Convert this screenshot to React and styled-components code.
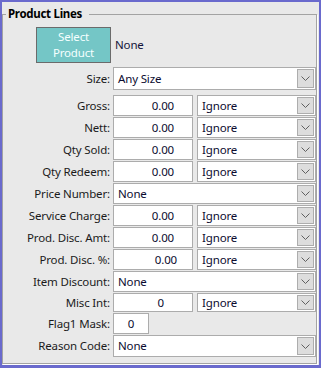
import React from "react";
import styled, { createGlobalStyle } from "styled-components";

const Global = createGlobalStyle`
  html, body { margin: 0; padding: 0; background: #e9e9e9; }
  * { box-sizing: border-box; }
  body {
    font-family: "Noto Sans", "Segoe UI", Arial, sans-serif;
    font-size: 11.5px;
    letter-spacing: -0.15px;
    color: #111;
  }
`;

const Frame = styled.div`
  width: 321px;
  height: 368px;
  border: 2px solid #6a6acd;
  border-bottom-width: 3px;
  background: #e9e9e9;
  overflow: hidden;
`;

const Group = styled.fieldset`
  margin: 4px 2px 0 0;
  padding: 5px 0 5px 0;
  border: 1px solid #a3a3a3;
  box-shadow: 1px 1px 0 #ffffff;
  min-width: 0;
`;

const Legend = styled.legend`
  margin-left: 3px;
  padding: 0 7px 0 2px;
  font-weight: bold;
  font-size: 11.5px;
  letter-spacing: -0.3px;
  line-height: 16px;
  color: #000;
`;

const Row = styled.div`
  display: grid;
  grid-template-columns: 107px 1fr;
  column-gap: 3px;
  height: ${(p) => p.$h}px;
  margin-bottom: ${(p) => p.$mb || 0}px;
  align-items: start;
`;

const Label = styled.div`
  text-align: right;
  line-height: ${(p) => p.$h}px;
  height: ${(p) => p.$h}px;
  white-space: nowrap;
  color: #1b1b1b;
`;

const ButtonCell = styled.div`
  display: flex;
  justify-content: flex-end;
`;

const SelectButton = styled.button`
  width: 75px;
  height: 36px;
  margin-right: -1px;
  background: #74c6c6;
  border: 1px solid #6b6b6b;
  color: #f4ffff;
  font-family: inherit;
  font-size: 11.5px;
  letter-spacing: -0.15px;
  line-height: 16px;
  padding: 0;
  text-align: center;
`;

const Plain = styled.div`
  line-height: 36px;
  padding-left: 2px;
  color: #14143a;
`;

const Controls = styled.div`
  display: flex;
  gap: 4px;
  height: ${(p) => p.$h}px;
`;

const NumberBox = styled.div`
  width: ${(p) => p.$w || 80}px;
  height: ${(p) => p.$h}px;
  background: #fff;
  border: 1px solid #acacac;
  text-align: ${(p) => p.$align || "right"};
  padding-right: ${(p) => p.$pr ?? 18}px;
  line-height: ${(p) => p.$h - 2}px;
  color: #0c0c30;
  flex: none;
`;

const SelectBox = styled.div`
  flex: 1;
  height: ${(p) => p.$h}px;
  background: #fff;
  border: 1px solid #acacac;
  padding: 1px;
  display: flex;
  align-items: stretch;
  min-width: 0;
`;

const SelectText = styled.div`
  flex: 1;
  padding-left: 3px;
  line-height: ${(p) => p.$h - 4}px;
  color: #0c0c30;
  white-space: nowrap;
  overflow: hidden;
`;

const DropButton = styled.div`
  width: 17px;
  flex: none;
  background: #dddddd;
  border: 1px solid #adadad;
  display: flex;
  align-items: center;
  justify-content: center;
`;

const Chevron = () => (
  <svg width="9" height="5" viewBox="0 0 9 5">
    <path d="M0.5 0.5 L4.5 4.5 L8.5 0.5" fill="none" stroke="#606060" strokeWidth="1" />
  </svg>
);

const Select = ({ value, h }) => (
  <SelectBox $h={h}>
    <SelectText $h={h}>{value}</SelectText>
    <DropButton>
      <Chevron />
    </DropButton>
  </SelectBox>
);

const NumberRow = ({ label, value, h = 22, pr }) => (
  <Row $h={h}>
    <Label $h={h - 1}>{label}</Label>
    <Controls $h={h - 1}>
      <NumberBox $h={h - 1} $pr={pr}>{value}</NumberBox>
      <Select value="Ignore" h={h - 1} />
    </Controls>
  </Row>
);

const SelectRow = ({ label, value, h = 22, mb }) => (
  <Row $h={h} $mb={mb}>
    <Label $h={h - 1}>{label}</Label>
    <Controls $h={h - 1}>
      <Select value={value} h={h - 1} />
    </Controls>
  </Row>
);

export default function App() {
  return (
    <>
      <Global />
      <Frame>
        <Group>
          <Legend>Product Lines</Legend>
          <Row $h={36} $mb={4}>
            <ButtonCell>
              <SelectButton>
                Select
                <br />
                Product
              </SelectButton>
            </ButtonCell>
            <Plain>None</Plain>
          </Row>
          <SelectRow label="Size:" value="Any Size" h={24} mb={4} />
          <NumberRow label="Gross:" value="0.00" />
          <NumberRow label="Nett:" value="0.00" />
          <NumberRow label="Qty Sold:" value="0.00" />
          <NumberRow label="Qty Redeem:" value="0.00" />
          <SelectRow label="Price Number:" value="None" />
          <NumberRow label="Service Charge:" value="0.00" />
          <NumberRow label="Prod. Disc. Amt:" value="0.00" />
          <NumberRow label="Prod. Disc. %:" value="0.00" pr={15} />
          <SelectRow label="Item Discount:" value="None" />
          <NumberRow label="Misc Int:" value="0" h={20} pr={28} />
          <Row $h={22}>
            <Label $h={21}>Flag1 Mask:</Label>
            <Controls $h={21}>
              <NumberBox $h={21} $w={36} $align="center" $pr={0}>0</NumberBox>
            </Controls>
          </Row>
          <SelectRow label="Reason Code:" value="None" h={23} />
        </Group>
      </Frame>
    </>
  );
}
